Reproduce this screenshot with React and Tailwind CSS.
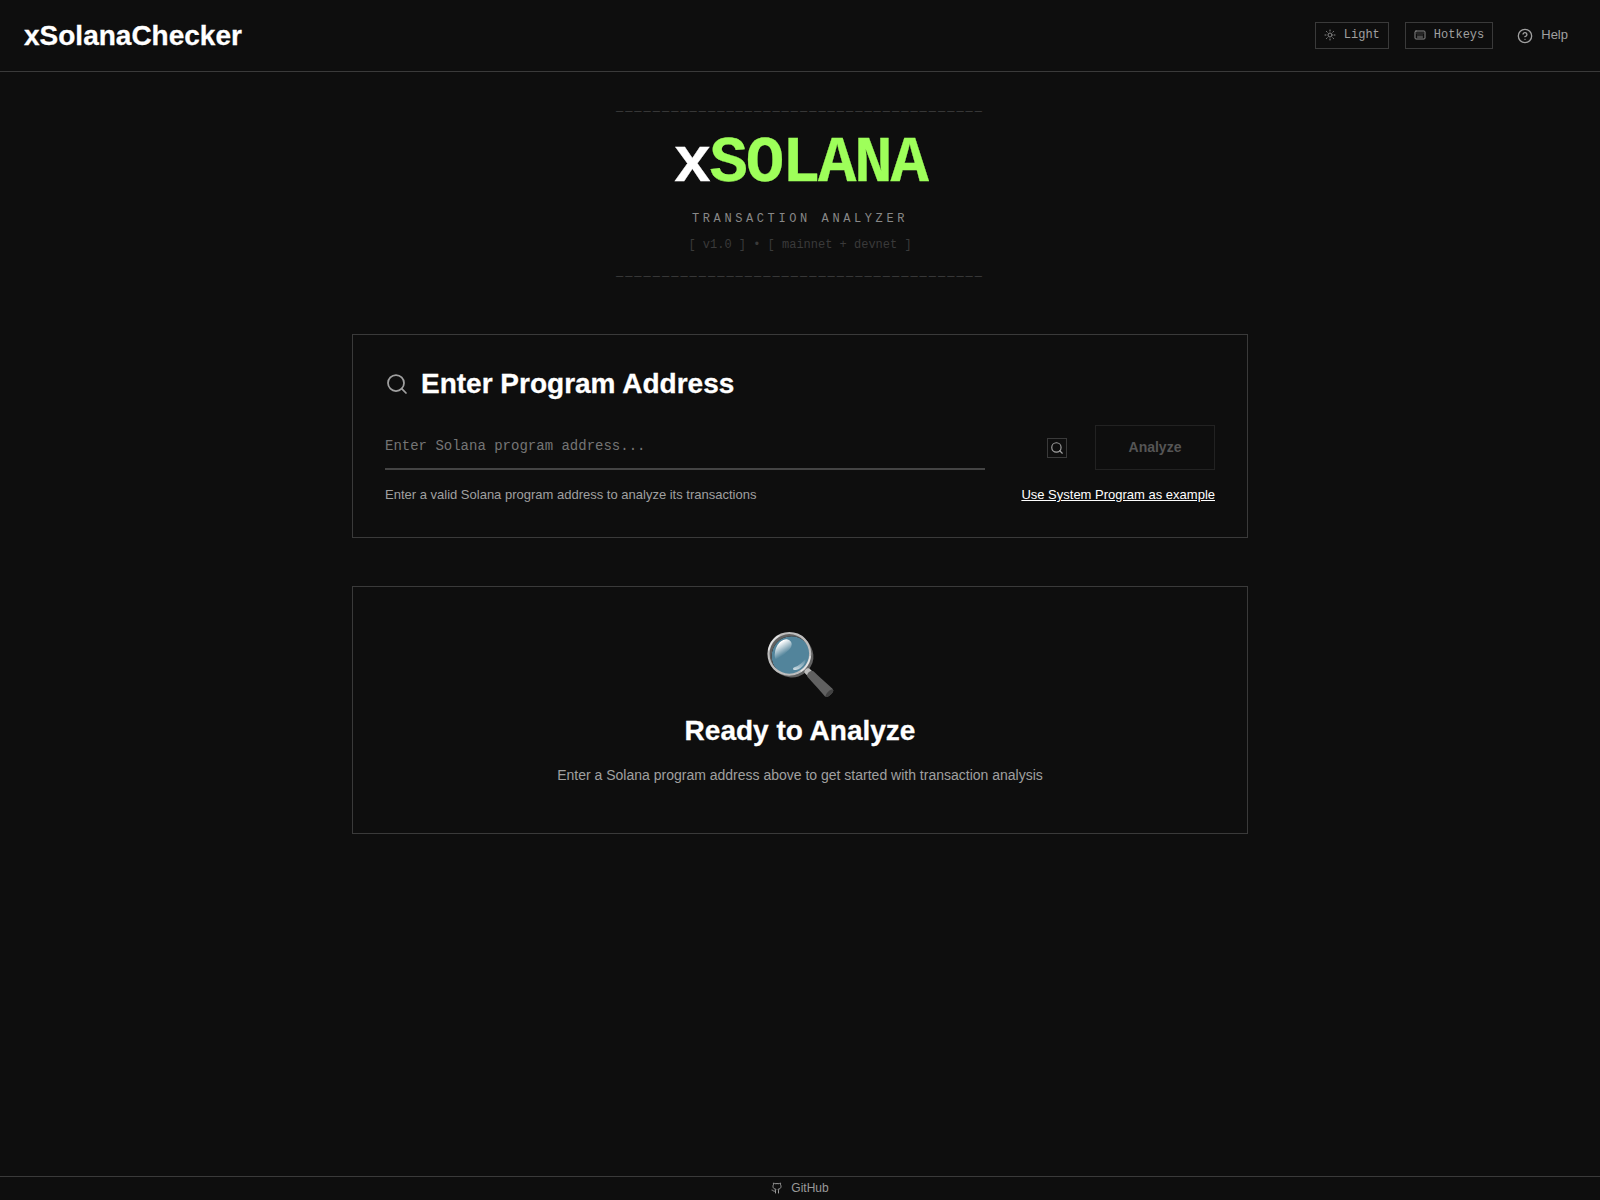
// App.jsx
import React from "react";
import { Sun, Keyboard, CircleHelp, Search, Github } from "lucide-react";

const SANS = "font-['Arial','Liberation_Sans',sans-serif]";
const MONO = "font-['Courier_New','Liberation_Mono',monospace]";
const RULE = "─".repeat(40);

function Header() {
  return (
    <header className="flex h-[72px] items-center justify-between border-b border-[#3a3a3a] px-6">
      <h1 className="text-[28px] leading-9 font-bold text-white [-webkit-text-stroke:0.3px]">xSolanaChecker</h1>
      <nav className="flex items-center gap-4">
        <button className={`${MONO} flex h-[27px] items-center gap-2 border border-[#3a3a3a] px-2 pb-0.5 text-xs text-[#a0a0a0]`}>
          <Sun size={12} className="text-[#888888]" />
          Light
        </button>
        <button className={`${MONO} flex h-[27px] items-center gap-2 border border-[#3a3a3a] px-2 pb-0.5 text-xs text-[#a0a0a0]`}>
          <Keyboard size={12} className="text-[#888888]" />
          Hotkeys
        </button>
        <button className="flex items-center gap-2 px-2 text-[13px] text-[#a0a0a0]">
          <CircleHelp size={16} />
          <span className="-mt-0.5">Help</span>
        </button>
      </nav>
    </header>
  );
}

function Hero() {
  return (
    <section className={`${MONO} flex flex-col items-center pt-8`}>
      <div className="text-xs leading-4 tracking-[2px] text-[#3a3a3a]">{RULE}</div>
      <div className="mt-3 text-[64px] leading-[64px] font-bold tracking-[-2.2px] text-[#9eff5a] [-webkit-text-stroke:0.3px]">
        <span className="text-white">x</span>SOLANA
      </div>
      <div className="mt-[15px] text-xs leading-4 tracking-[0.3em] text-[#888888]">TRANSACTION ANALYZER</div>
      <div className="mt-2.5 text-xs leading-4 text-[#3a3a3a]">[ v1.0 ] • [ mainnet + devnet ]</div>
      <div className="mt-4 text-xs leading-4 tracking-[2px] text-[#3a3a3a]">{RULE}</div>
    </section>
  );
}

function AddressCard() {
  return (
    <section className="mx-auto mt-[49px] w-[896px] border border-[#3a3a3a] px-8 pt-[31px] pb-8">
      <div className="flex items-center gap-3">
        <Search size={24} className="text-[#a0a0a0]" strokeWidth={1.75} />
        <h2 className="text-[28px] leading-9 font-bold text-white [-webkit-text-stroke:0.3px]">Enter Program Address</h2>
      </div>
      <div className="mt-[23px] flex items-end">
        <div className="w-[600px] border-b-2 border-[#444444] pb-2.5">
          <input
            placeholder="Enter Solana program address..."
            className={`${MONO} block w-full bg-transparent text-sm leading-6 text-white outline-none placeholder:text-[#757575]`}
          />
        </div>
        <div className="ml-[62px] flex h-5 w-5 items-center justify-center self-center border border-[#3a3a3a]">
          <Search size={14} className="text-[#a0a0a0]" />
        </div>
        <button className="ml-7 h-[45px] w-[120px] border border-[#222222] pb-0.5 text-sm font-bold text-[#555555]">Analyze</button>
      </div>
      <div className="mt-[15px] flex items-center justify-between text-[13px] leading-5">
        <span className="text-[#a0a0a0]">Enter a valid Solana program address to analyze its transactions</span>
        <a className="text-white underline">Use System Program as example</a>
      </div>
    </section>
  );
}

function EmptyCard() {
  return (
    <section className="mx-auto mt-12 flex w-[896px] flex-col items-center border border-[#3a3a3a] px-8 pt-[41px] pb-12">
      <div className="text-6xl leading-[73px]">🔍</div>
      <h3 className="mt-3 text-[28px] leading-9 font-bold text-white [-webkit-text-stroke:0.3px]">Ready to Analyze</h3>
      <p className="mt-4 text-sm leading-5 text-[#a0a0a0]">
        Enter a Solana program address above to get started with transaction analysis
      </p>
    </section>
  );
}

export default function App() {
  return (
    <div className={`${SANS} flex min-h-screen flex-col [html:has(&)]:bg-[#0e0e0e]`}>
      <Header />
      <main className="flex-1">
        <Hero />
        <AddressCard />
        <EmptyCard />
      </main>
      <footer className="flex h-6 items-center justify-center gap-2 border-t border-[#3a3a3a] pb-0.5 text-xs text-[#999999]">
        <Github size={12} />
        GitHub
      </footer>
    </div>
  );
}
